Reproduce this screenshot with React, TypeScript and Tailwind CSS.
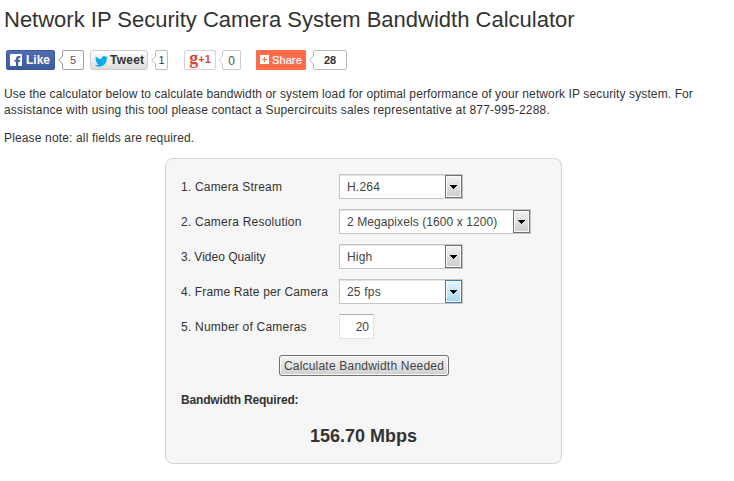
import React from 'react';
import { clsx } from 'clsx';

const fields = [
  { label: '1. Camera Stream', value: 'H.264', width: 'w-[124px]', labelSpacing: 'tracking-[0.19px]', valueSpacing: 'tracking-[0.2px]' },
  { label: '2. Camera Resolution', value: '2 Megapixels (1600 x 1200)', width: 'w-[192px]', labelSpacing: 'tracking-[0.23px]', valueSpacing: 'tracking-[0.09px]' },
  { label: '3. Video Quality', value: 'High', width: 'w-[124px]', labelSpacing: 'tracking-normal', valueSpacing: 'tracking-[0.2px]' },
  { label: '4. Frame Rate per Camera', value: '25 fps', width: 'w-[124px]', labelSpacing: 'tracking-[0.15px]', valueSpacing: 'tracking-[0.2px]', active: true },
];

export default function App() {
  return (
    <main className="h-[481px] w-[734px] overflow-hidden bg-white pl-1 font-['Liberation_Sans',Arial,sans-serif] text-[12px] leading-4 text-[#333]">
      <h1 className="pt-[6px] text-[22px] leading-7 whitespace-nowrap">
        <span>Network IP Security Camera System Bandwidth Calculator</span>
      </h1>
      <ShareBar />
      <p className="mt-4 whitespace-nowrap">
        <span className="tracking-[0.113px]">
          Use the calculator below to calculate bandwidth or system load for optimal performance of your network IP security system. For
        </span>
        <br />
        <span className="tracking-[0.19px]">
          assistance with using this tool please contact a Supercircuits sales representative at 877-995-2288.
        </span>
      </p>
      <p className="mt-3">
        <span className="tracking-[0.15px]">Please note: all fields are required.</span>
      </p>

      <section className="mt-3 ml-[161px] h-[306px] w-[397px] rounded-[8px] border border-[#d3d3d3] bg-[#f6f6f6] px-[15px] pt-[15px]">
        <div className="flex flex-col gap-[10px]">
          {fields.map((field) => (
            <div key={field.label} className="flex h-[25px] items-center">
              <label className={clsx('w-[158px] whitespace-nowrap', field.labelSpacing)}>{field.label}</label>
              <Select value={field.value} width={field.width} spacing={field.valueSpacing} active={field.active} />
            </div>
          ))}
          <div className="flex h-[25px] items-center">
            <label className="w-[158px] tracking-[0.22px]">5. Number of Cameras</label>
            <div className="h-[25px] w-[35px] border border-[#e2e3ea] border-t-[#abadb3] bg-white pr-1 text-right leading-[24px] text-[#444]">
              20
            </div>
          </div>
        </div>
        <div className="mt-4 ml-[98px]">
          <button className="flex h-[21px] w-[170px] items-center justify-center rounded-[3px] border border-[#707070] bg-linear-to-b from-[#f2f2f2] via-[#e6e6e6] to-[#cdcdcd] tracking-[0.21px] whitespace-nowrap text-[#444] shadow-[inset_0_0_0_1px_#fafafa]">
            Calculate Bandwidth Needed
          </button>
        </div>
        <div className="mt-4 font-bold tracking-[-0.17px]">Bandwidth Required:</div>
        <div className="mt-4 text-center text-[18px] leading-6 font-bold">156.70 Mbps</div>
      </section>
    </main>
  );
}

interface SelectProps {
  value: string;
  width: string;
  spacing: string;
  active?: boolean;
}

function Select({ value, width, spacing, active }: SelectProps) {
  return (
    <div className={clsx('flex h-[25px] border border-[#c5c5c5] bg-white shadow-[inset_0_1px_0_#e4e4e4]', width)}>
      <span className={clsx('flex-1 pl-[7px] leading-[24px] whitespace-nowrap text-[#444]', spacing)}>{value}</span>
      <span
        className={clsx(
          'flex h-[23px] w-[17px] items-center justify-center border bg-linear-to-b',
          active
            ? 'border-[#3c7fb1] from-[#e8f5fd] to-[#a4d8f4] shadow-[inset_0_0_0_1px_#f5fbff]'
            : 'border-[#707070] from-[#f2f2f2] to-[#cdcdcd] shadow-[inset_0_0_0_1px_#fafafa]'
        )}
      >
        <svg width="7" height="4" viewBox="0 0 7 4" shapeRendering="crispEdges">
          <path d="M0 0H7V1H6V2H5V3H4V4H3V3H2V2H1V1H0Z" fill="#000" />
        </svg>
      </span>
    </div>
  );
}

function ShareBar() {
  return (
    <div className="mt-4 ml-[2px] flex h-5">
      <div className="flex h-5 w-[49px] items-center rounded-[2px] border border-[#3b579d] bg-linear-to-b from-[#4f6cb5] to-[#3d5a9f] pl-[3px] text-[12px] font-bold text-white">
        <svg width="12" height="12" viewBox="0 0 12 12">
          <rect width="12" height="12" rx="1" fill="#fff" />
          <path d="M6 12V7.7H4.4V5.7H6V4.7C6 3 7 2 8.8 2H10.4V4H9.3C8.6 4 8.3 4.3 8.3 4.9V5.7H10.3L10 7.7H8.3V12Z" fill="#4663aa" />
        </svg>
        <span className="-mt-px ml-[4px] leading-4">Like</span>
      </div>
      <Bubble className="ml-[3px] w-[26px]" color="#999fab">
        <span className="-mt-px text-[11px] text-[#4e5665]">5</span>
      </Bubble>

      <div className="ml-[6px] flex h-5 w-[58px] items-center rounded-[3px] border border-[#ccc] bg-linear-to-b from-white to-[#dedede] pl-[4px] text-[12px] font-bold text-[#333]">
        <svg width="13" height="11" viewBox="0 0 24 20" className="mt-[2px] shrink-0">
          <path
            d="M24 2.4a10 10 0 0 1-2.8.8A5 5 0 0 0 23.3.5a10 10 0 0 1-3.1 1.2A4.9 4.9 0 0 0 11.8 6 14 14 0 0 1 1.7.9a4.9 4.9 0 0 0 1.5 6.6A5 5 0 0 1 1 6.9a4.9 4.9 0 0 0 3.9 4.9 5 5 0 0 1-2.2.1 4.9 4.9 0 0 0 4.6 3.4A9.9 9.9 0 0 1 0 17.3 14 14 0 0 0 21.5 4.9 10 10 0 0 0 24 2.4Z"
            fill="#00aced"
          />
        </svg>
        <span className="-mt-px ml-[2px] tracking-[0.25px]">Tweet</span>
      </div>
      <Bubble className="ml-[3px] w-[17px]" color="#bbb">
        <span className="-mt-px text-[11px] text-[#333]">1</span>
      </Bubble>

      <div className="ml-4 flex h-5 w-8 items-center justify-center rounded-[2px] border border-[#d4d4d4] bg-white font-bold text-[#d64937]">
        <span className="-mt-[5px] font-['Liberation_Serif',serif] text-[18px] leading-4">g</span>
        <span className="-mt-[2px] text-[11px]">+1</span>
      </div>
      <Bubble className="ml-[2px] w-[23px]" color="#ccc">
        <span className="mt-[2px] text-[12px] text-[#555]">0</span>
      </Bubble>

      <div className="ml-[15px] flex h-5 w-[50px] items-center rounded-[1px] bg-[#ff6d4c] pl-[4px] text-[11px] text-white">
        <svg width="9" height="9" viewBox="0 0 9 9" shapeRendering="crispEdges" className="-mt-px shrink-0">
          <path d="M0 0H9V9H0Z" fill="#fff" />
          <path d="M4 2H5V4H7V5H5V7H4V5H2V4H4Z" fill="#ff6d4c" />
        </svg>
        <span className="ml-[3px] tracking-[0.1px] [-webkit-text-stroke:0.2px_white]">Share</span>
      </div>
      <Bubble className="ml-[3px] w-[38px]" color="#bbb">
        <span className="-mt-px text-[11px] font-bold text-[#333]">28</span>
      </Bubble>
    </div>
  );
}

interface BubbleProps {
  className: string;
  color: string;
  children: React.ReactNode;
}

function Bubble({ className, color, children }: BubbleProps) {
  return (
    <div className={clsx('flex h-5 items-center', className)}>
      <svg width="5" height="10" viewBox="0 0 5 10" className="z-10 -mr-px shrink-0">
        <path d="M5 .5L.8 5L5 9.5" fill="#fff" stroke={color} />
      </svg>
      <div className="flex h-5 flex-1 items-center justify-center rounded-[2px] border bg-white" style={{ borderColor: color }}>
        {children}
      </div>
    </div>
  );
}
